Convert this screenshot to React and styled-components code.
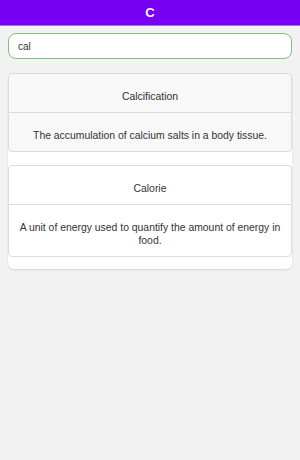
import React, { useState } from 'react'
import styled, { createGlobalStyle } from 'styled-components'

const GlobalStyle = createGlobalStyle`
  html, body {
    margin: 0;
    padding: 0;
    background: #f2f2f2;
    font-family: "Liberation Sans", Arial, sans-serif;
  }
`

const terms = [
  { title: 'Calcification', text: 'The accumulation of calcium salts in a body tissue.', shaded: true },
  { title: 'Calorie', text: 'A unit of energy used to quantify the amount of energy in food.' },
]

const App = () => {
  const [query, setQuery] = useState('cal')
  return (
    <Page>
      <GlobalStyle />
      <Header>C</Header>
      <Content>
        <Search value={query} onChange={e => setQuery(e.target.value)} />
        <List>
          {terms.map(t => (
            <Card key={t.title} shaded={t.shaded ? 1 : 0}>
              <Title>{t.title}</Title>
              <Definition>{t.text}</Definition>
            </Card>
          ))}
        </List>
      </Content>
    </Page>
  )
}

export default App

const Page = styled.div`
  width: 300px;
  min-height: 460px;
  background: #f2f2f2;
`

const Header = styled.div`
  height: 25px;
  background: #7700f4;
  border-bottom: 1px solid #a66bf7;
  color: white;
  font-weight: 700;
  font-size: 13px;
  display: flex;
  align-items: center;
  justify-content: center;
`

const Content = styled.div`
  padding: 7px 8px;
  display: flex;
  flex-direction: column;
  gap: 14px;
`

const Search = styled.input`
  box-sizing: border-box;
  width: 100%;
  height: 26px;
  border: 1px solid #7cc47f;
  border-radius: 8px;
  background: white;
  padding: 0 9px;
  font-family: "Liberation Sans", Arial, sans-serif;
  font-size: 10px;
  color: #333;
  outline: none;
`

const List = styled.div`
  background: white;
  border-radius: 6px;
  box-shadow: 0 1px 2px rgba(0, 0, 0, 0.12);
  padding-bottom: 12px;
  display: flex;
  flex-direction: column;
  gap: 13px;
`

const Card = styled.div`
  background: ${p => (p.shaded ? '#f8f8f8' : 'white')};
  border: 1px solid #dcdcdc;
  border-radius: 4px;
  color: #333;
  font-size: 10.4px;
  text-align: center;
`

const Title = styled.div`
  padding: 16px 8px 9px;
  line-height: 13px;
  border-bottom: 1px solid #dcdcdc;
`

const Definition = styled.div`
  padding: 16px 8px 9px;
  line-height: 13px;
`
